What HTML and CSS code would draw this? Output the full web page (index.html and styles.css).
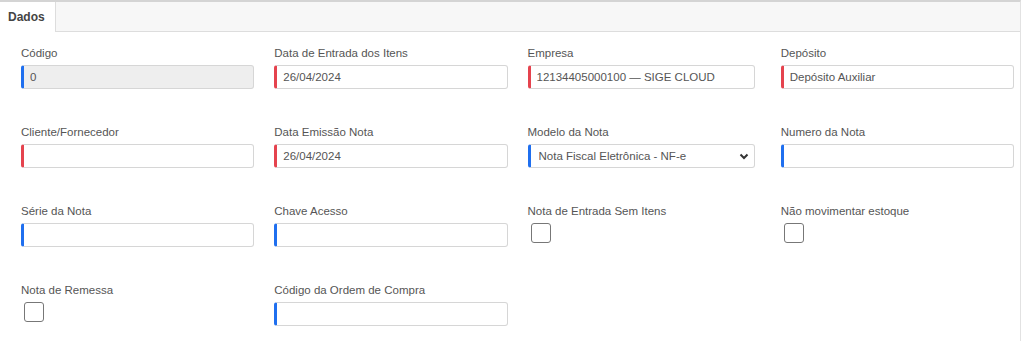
FILE: index.html
```html
<!DOCTYPE html>
<html lang="pt-BR">
<head>
    <meta charset="UTF-8">
    <meta name="viewport" content="width=device-width, initial-scale=1.0">
    <title>Nota de Entrada</title>
    <link rel="stylesheet" href="styles.css">
</head>
<body>
    <div class="panel">
        <div class="tabs">
            <div class="tab active">Dados</div>
            <div class="tab-fill"></div>
        </div>
        <div class="form-grid">
            <div class="field">
                <label>Código</label>
                <input type="text" class="input req-blue readonly" value="0" readonly>
            </div>
            <div class="field">
                <label>Data de Entrada dos Itens</label>
                <input type="text" class="input req-red" value="26/04/2024">
            </div>
            <div class="field narrow">
                <label>Empresa</label>
                <input type="text" class="input req-red" value="12134405000100 — SIGE CLOUD">
            </div>
            <div class="field">
                <label>Depósito</label>
                <input type="text" class="input req-red" value="Depósito Auxiliar">
            </div>

            <div class="field">
                <label>Cliente/Fornecedor</label>
                <input type="text" class="input req-red">
            </div>
            <div class="field">
                <label>Data Emissão Nota</label>
                <input type="text" class="input req-red" value="26/04/2024">
            </div>
            <div class="field narrow">
                <label>Modelo da Nota</label>
                <div class="select-wrap">
                    <select class="input req-blue">
                        <option>Nota Fiscal Eletrônica - NF-e</option>
                    </select>
                    <svg class="chevron" width="10" height="7" viewBox="0 0 10 7"><path d="M1.5 1.5 L5 5 L8.5 1.5" fill="none" stroke="#333" stroke-width="2"/></svg>
                </div>
            </div>
            <div class="field">
                <label>Numero da Nota</label>
                <input type="text" class="input req-blue">
            </div>

            <div class="field">
                <label>Série da Nota</label>
                <input type="text" class="input req-blue">
            </div>
            <div class="field">
                <label>Chave Acesso</label>
                <input type="text" class="input req-blue">
            </div>
            <div class="field narrow">
                <label>Nota de Entrada Sem Itens</label>
                <span class="check"></span>
            </div>
            <div class="field">
                <label>Não movimentar estoque</label>
                <span class="check"></span>
            </div>

            <div class="field">
                <label>Nota de Remessa</label>
                <span class="check"></span>
            </div>
            <div class="field">
                <label>Código da Ordem de Compra</label>
                <input type="text" class="input req-blue">
            </div>
        </div>
    </div>
</body>
</html>
```

FILE: styles.css
```css
body {
    margin: 0;
    font-family: 'Liberation Sans', Arial, sans-serif;
    font-size: 11.5px;
    color: #555;
    background: #fff;
}
.panel {
    border-top: 2px solid #d4d4d4;
    border-right: 1px solid #e2e2e2;
    margin-right: 3px;
    height: 339px;
    background: #fff;
}
.tabs {
    display: flex;
    height: 30px;
}
.tab {
    width: 55px;
    padding-left: 8px;
    box-sizing: border-box;
    line-height: 30px;
    font-size: 12px;
    font-weight: bold;
    color: #444;
    background: #fff;
}
.tab-fill {
    flex: 1;
    background: #f7f7f7;
    border-left: 1px solid #ddd;
    border-bottom: 1px solid #ddd;
}
.form-grid {
    display: grid;
    grid-template-columns: repeat(4, 1fr);
    column-gap: 20px;
    row-gap: 36px;
    padding: 14px 6px 0 21px;
}
.field.narrow {
    margin-right: 6px;
}
.field label {
    display: block;
    height: 14px;
    line-height: 14px;
    margin-bottom: 5px;
    color: #555;
}
.input {
    display: block;
    width: 100%;
    height: 24px;
    box-sizing: border-box;
    border: 1px solid #d6d6d6;
    border-radius: 3px;
    padding: 0 6px;
    font-family: inherit;
    font-size: 11.5px;
    color: #555;
    background: #fff;
    outline: none;
}
.req-red {
    border-left: 3px solid #e5434e;
}
.req-blue {
    border-left: 3px solid #1f6fef;
}
.readonly {
    background: #eee;
}
.select-wrap {
    position: relative;
}
select.input {
    appearance: none;
    -webkit-appearance: none;
    padding-left: 8px;
}
.chevron {
    position: absolute;
    right: 6px;
    top: 9px;
    pointer-events: none;
}
.check {
    display: block;
    width: 20px;
    height: 20px;
    box-sizing: border-box;
    margin-left: 3px;
    margin-top: 3px;
    border: 1px solid #777;
    border-radius: 3px;
    background: #fff;
}
```
